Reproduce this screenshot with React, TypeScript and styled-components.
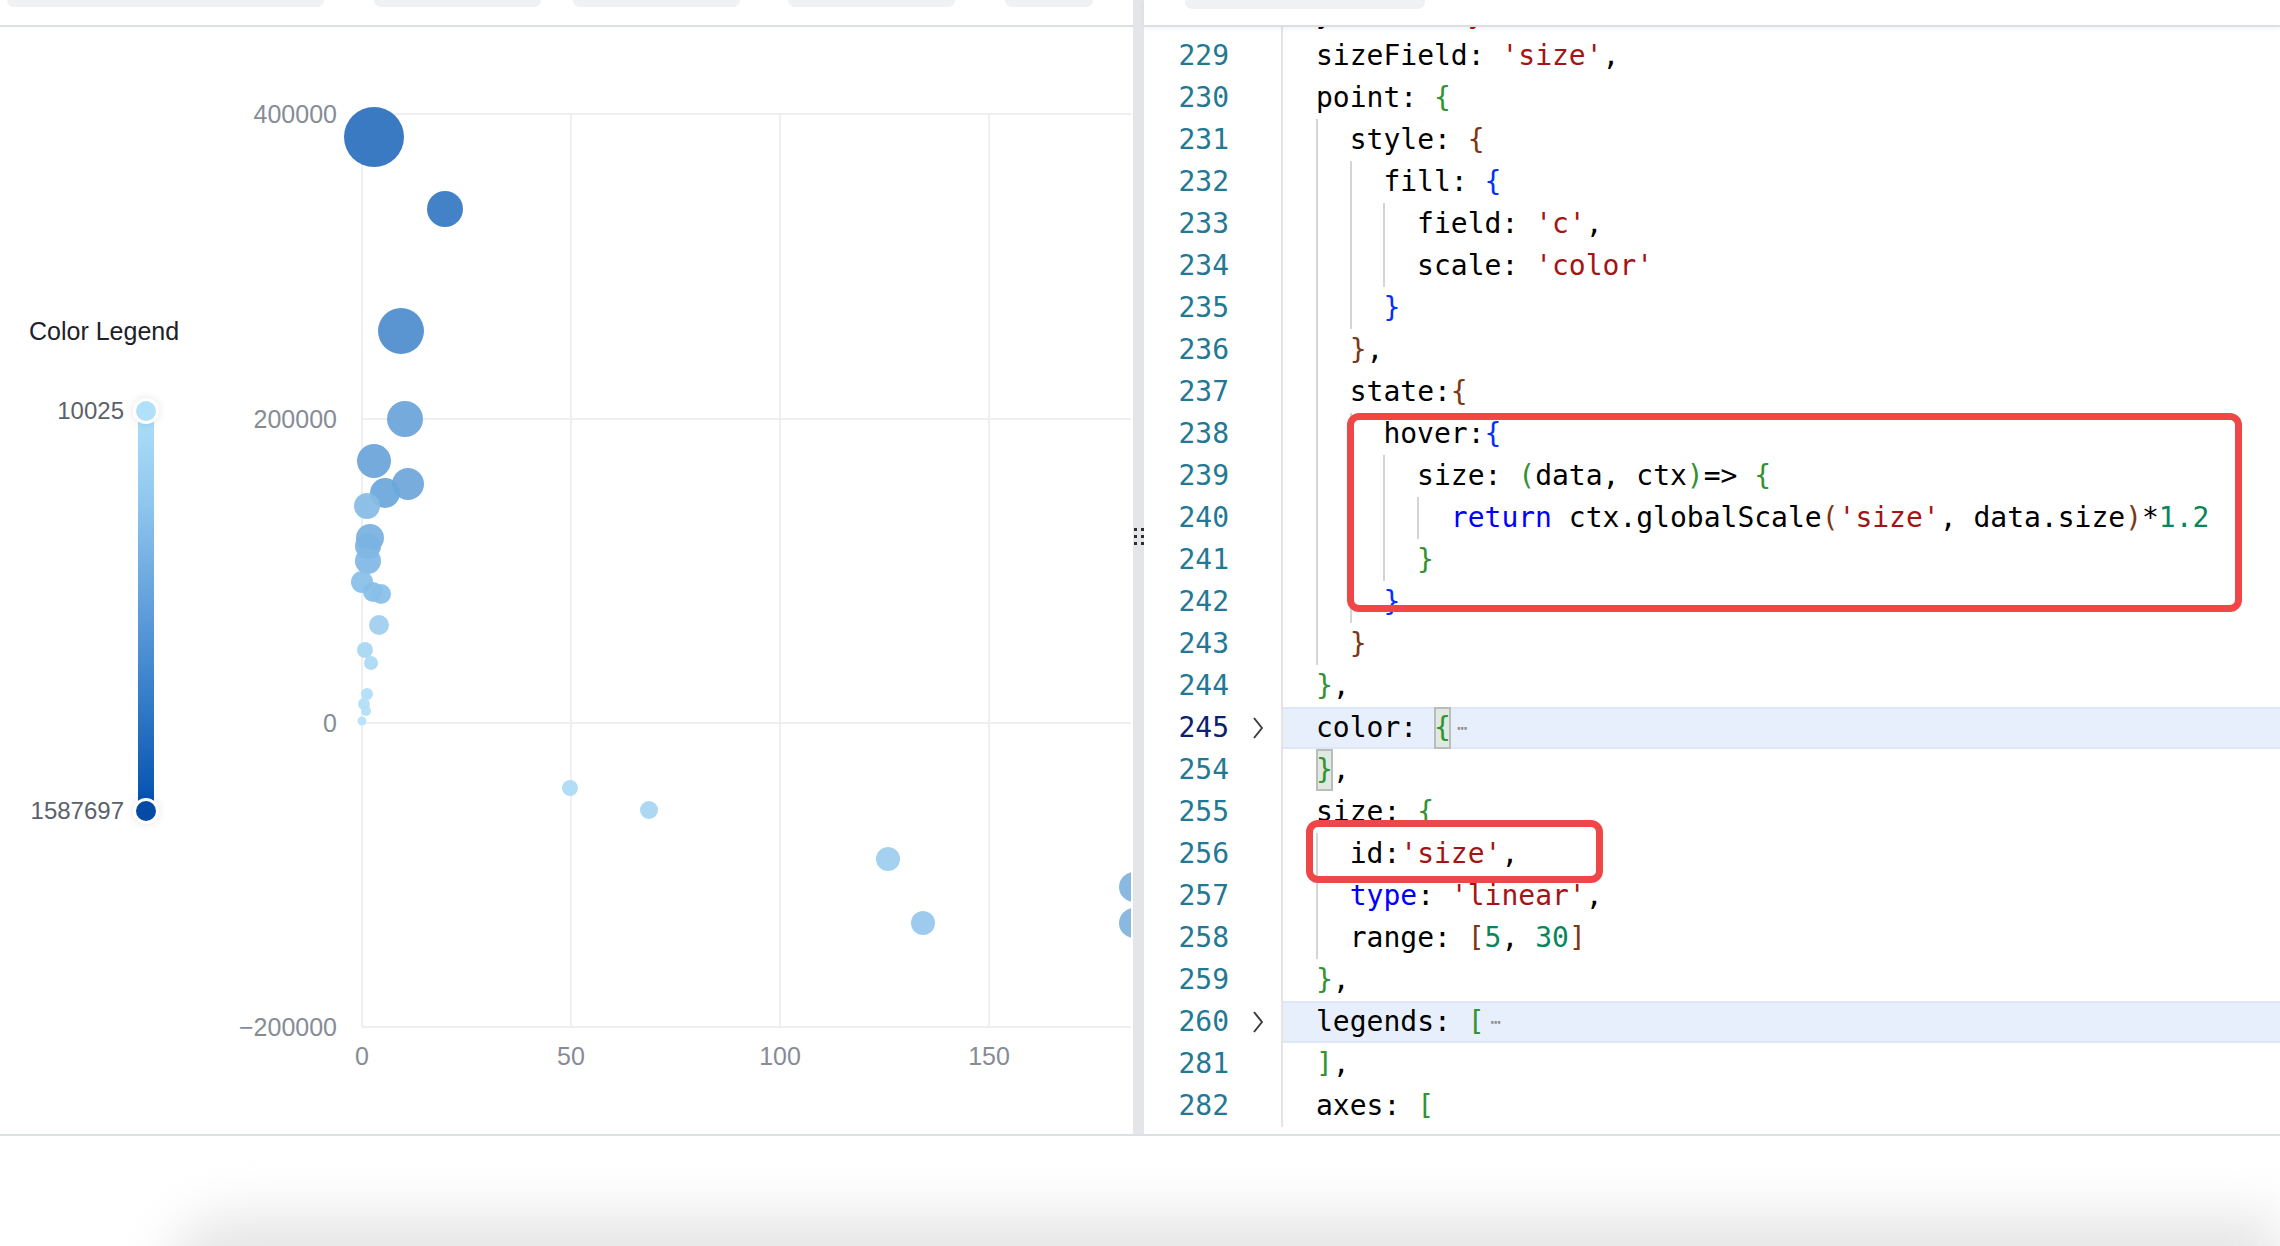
import React from 'react';
import styled, { createGlobalStyle } from 'styled-components';

const GlobalStyle = createGlobalStyle`
  html, body {
    margin: 0;
    padding: 0;
    background: #fff;
  }
  body {
    font-family: "Liberation Sans", Arial, sans-serif;
  }
`

const Page = styled.div`
    position: relative;
    width: 2280px;
    height: 1246px;
    display: flex;
    flex-direction: column;
    overflow: hidden;
    background: #fff;
`

const Workspace = styled.div`
    height: 1134px;
    display: flex;
    border-bottom: 2px solid #dcdfe3;
    flex-shrink: 0;
`

const Pane = styled.div<{ $w?: number }>`
    ${p => p.$w ? `width: ${p.$w}px;` : 'flex: 1;'}
    display: flex;
    flex-direction: column;
    min-width: 0;
`

const TabStrip = styled.div<{ $shadow?: boolean }>`
    height: 25px;
    flex-shrink: 0;
    display: flex;
    align-items: flex-start;
    border-bottom: 2px solid #dcdfe3;
    ${p => p.$shadow ? 'box-shadow: 0 2px 5px rgba(0,0,0,0.05);' : ''}
    position: relative;
    z-index: 1;
`

const TabStub = styled.div<{ $w: number; $ml: number; $h?: number }>`
    width: ${p => p.$w}px;
    margin-left: ${p => p.$ml}px;
    height: ${p => p.$h || 7}px;
    background: #f0f1f3;
    border-radius: 0 0 7px 7px;
`

const Divider = styled.div`
    width: 11px;
    flex-shrink: 0;
    background: #e3e5e9;
    display: flex;
    justify-content: center;
    padding-top: 528px;
    box-sizing: border-box;
`

const Grip = styled.div`
    display: grid;
    grid-template-columns: 3px 3px;
    grid-auto-rows: 3px;
    column-gap: 4px;
    row-gap: 4px;
    height: max-content;
`

const GripDot = styled.span`
    background: #2e2e2e;
`

/* ---------- chart side ---------- */

const ChartArea = styled.div`
    flex: 1;
    display: flex;
    overflow: hidden;
`

const Legend = styled.div`
    width: 230px;
    flex-shrink: 0;
    box-sizing: border-box;
    padding: 289px 0 0 29px;
    display: flex;
    flex-direction: column;
`

const LegendTitle = styled.div`
    font-size: 25px;
    line-height: 30px;
    color: #1d2129;
`

const ScaleRow = styled.div`
    margin-top: 50px;
    display: flex;
`

const ScaleLabels = styled.div`
    width: 95px;
    height: 430px;
    display: flex;
    flex-direction: column;
    justify-content: space-between;
    align-items: flex-end;
    font-size: 24px;
    line-height: 30px;
    color: #5b616b;
`

const ScaleTrack = styled.div`
    position: relative;
    width: 16px;
    height: 400px;
    margin: 15px 0 0 14px;
    border-radius: 8px;
    background: linear-gradient(#ade0f8 0%, #92c8ef 22%, #5f9edb 50%, #2f78c6 75%, #004fae 100%);
`

const ScaleHandle = styled.span<{ $c: string; $bottom?: boolean }>`
    position: absolute;
    left: -5px;
    ${p => p.$bottom ? 'bottom: -13px;' : 'top: -13px;'}
    width: 20px;
    height: 20px;
    border-radius: 50%;
    background: ${p => p.$c};
    border: 3px solid #fff;
    box-shadow: 0 0 10px rgba(0, 0, 0, 0.1);
`

const Plot = styled.svg`
    display: block;
    flex-shrink: 0;
`

/* ---------- editor side ---------- */

const Editor = styled.div`
    flex: 1;
    overflow: hidden;
    background: #fff;
    font-family: "DejaVu Sans Mono", "Liberation Mono", monospace;
    font-size: 28px;
`

const Lines = styled.div`
    margin-top: -34px;
`

const LineRow = styled.div`
    display: flex;
    height: 42px;
`

const LineNo = styled.div<{ $active?: boolean }>`
    width: 85px;
    flex-shrink: 0;
    text-align: right;
    line-height: 42px;
    color: ${p => p.$active ? '#0b216f' : '#237893'};
`

const FoldCell = styled.div`
    width: 52px;
    flex-shrink: 0;
    display: flex;
    align-items: center;
    justify-content: center;
    padding-left: 6px;
    box-sizing: border-box;
`

const CodeCell = styled.div<{ $hl?: boolean }>`
    flex: 1;
    display: flex;
    align-items: stretch;
    white-space: pre;
    padding-left: 33px;
    border-left: 2px solid #e4e4e4;
    background: ${p => p.$hl ? '#e7effc' : 'transparent'};
    box-shadow: ${p => p.$hl ? 'inset 0 2px 0 #dde7f8, inset 0 -2px 0 #dde7f8' : 'none'};
`

const Indent = styled.span<{ $guide: boolean }>`
    display: inline-block;
    width: 2ch;
    flex-shrink: 0;
    box-shadow: ${p => p.$guide ? 'inset 2px 0 0 #d4d4d4' : 'none'};
`

const CodeText = styled.span`
    line-height: 42px;
    color: #000;
`

const Tok = styled.span<{ $c: string }>`
    color: ${p => p.$c};
`

const MatchBracket = styled.span<{ $c: string }>`
    display: inline-block;
    height: 42px;
    color: ${p => p.$c};
    background: #dfe9e2;
    box-shadow: inset 0 0 0 2px #b9bdbb;
`

const FoldDots = styled.span`
    font-size: 18px;
    color: #8d8d8d;
    margin-left: 6px;
    letter-spacing: -1px;
    vertical-align: 3px;
`

const Annotation = styled.div<{ $x: number; $y: number; $w: number; $h: number }>`
    position: absolute;
    left: ${p => p.$x}px;
    top: ${p => p.$y}px;
    width: ${p => p.$w}px;
    height: ${p => p.$h}px;
    box-sizing: border-box;
    border: 7px solid #ef4747;
    border-radius: 12px;
    pointer-events: none;
`

const Footer = styled.div`
    flex: 1;
    padding: 78px 0 0 165px;
    overflow: hidden;
`

const FooterShade = styled.div`
    height: 140px;
    border-radius: 70px 0 0 0;
    background: #e6e6e6;
    filter: blur(26px);
`

/* ---------- data ---------- */

const C = {
    k: '#000000',
    s: '#a31515',
    n: '#098658',
    kw: '#0000ff',
    g: '#319331',
    b: '#7b3814',
    u: '#0431fa',
};

type Seg = [string, string] | ['box', string, string] | ['dots'];

type Line = {
    no: number;
    guides: boolean[];
    segs: Seg[];
    fold?: boolean;
    hl?: boolean;
    active?: boolean;
};

const L = (no: number, depth: number, segs: Seg[], opts: Partial<Line> = {}): Line => ({
    no,
    guides: Array.from({ length: depth }, () => true),
    segs,
    ...opts,
});

const lines: Line[] = [
    L(228, 0, [["yField: ", C.k], ["'y'", C.s], [",", C.k]]),
    L(229, 0, [["sizeField: ", C.k], ["'size'", C.s], [",", C.k]]),
    L(230, 0, [["point: ", C.k], ["{", C.g]]),
    L(231, 1, [["style: ", C.k], ["{", C.b]]),
    L(232, 2, [["fill: ", C.k], ["{", C.u]]),
    L(233, 3, [["field: ", C.k], ["'c'", C.s], [",", C.k]]),
    L(234, 3, [["scale: ", C.k], ["'color'", C.s]]),
    L(235, 2, [["}", C.u]]),
    L(236, 1, [["}", C.b], [",", C.k]]),
    L(237, 1, [["state:", C.k], ["{", C.b]]),
    L(238, 2, [["hover:", C.k], ["{", C.u]]),
    L(239, 3, [["size: ", C.k], ["(", C.g], ["data, ctx", C.k], [")", C.g], ["=> ", C.k], ["{", C.g]]),
    L(240, 4, [["return", C.kw], [" ctx.globalScale", C.k], ["(", C.b], ["'size'", C.s], [", data.size", C.k], [")", C.b], ["*", C.k], ["1.2", C.n]]),
    L(241, 3, [["}", C.g]]),
    L(242, 2, [["}", C.u]]),
    L(243, 1, [["}", C.b]]),
    L(244, 0, [["}", C.g], [",", C.k]]),
    L(245, 0, [["color: ", C.k], ['box', "{", C.g], ['dots']], { fold: true, hl: true, active: true }),
    L(254, 0, [['box', "}", C.g], [",", C.k]]),
    L(255, 0, [["size: ", C.k], ["{", C.g]]),
    L(256, 1, [["id:", C.k], ["'size'", C.s], [",", C.k]]),
    L(257, 1, [["type", C.kw], [": ", C.k], ["'linear'", C.s], [",", C.k]]),
    L(258, 1, [["range: ", C.k], ["[", C.b], ["5", C.n], [", ", C.k], ["30", C.n], ["]", C.b]]),
    L(259, 0, [["}", C.g], [",", C.k]]),
    L(260, 0, [["legends: ", C.k], ["[", C.g], ['dots']], { fold: true, hl: true }),
    L(281, 0, [["]", C.g], [",", C.k]]),
    L(282, 0, [["axes: ", C.k], ["[", C.g]]),
];

type Bubble = [number, number, number, string];

const bubbles: Bubble[] = [
    [374, 137, 30, '#2b70be'],
    [445, 209, 18, '#3679c3'],
    [401, 331, 23, '#4f8dce'],
    [405, 419, 18, '#6aa4d9'],
    [374, 461, 17, '#6ba4d9'],
    [408, 484, 16, '#6da6da'],
    [385, 493, 15, '#6ba8dc'],
    [367, 506, 13, '#86bbe5'],
    [370, 538, 14, '#79b2e2'],
    [368, 546, 13, '#7bb4e3'],
    [368, 561, 13, '#80b7e4'],
    [362, 582, 11, '#89c0e8'],
    [373, 592, 10, '#87bde7'],
    [381, 594, 10, '#89bfe8'],
    [379, 625, 10, '#a0cef0'],
    [365, 650, 8, '#a8d6f4'],
    [371, 663, 7, '#abd9f5'],
    [367, 694, 6, '#b0ddf7'],
    [364, 704, 6, '#b3dff8'],
    [366, 711, 5, '#b3dff8'],
    [362, 721, 4.5, '#b7e1f9'],
    [570, 788, 8, '#acdaf5'],
    [649, 810, 9, '#a6d5f3'],
    [888, 859, 12, '#9dcdee'],
    [923, 923, 12, '#97c7ec'],
    [1134, 887, 15, '#80b3df'],
    [1134, 923, 15, '#80b3df'],
];

const yTicks: [string, number][] = [
    ['400000', 114],
    ['200000', 419],
    ['0', 723],
    ['\u2212200000', 1027],
];

const xTicks: [string, number][] = [
    ['0', 362],
    ['50', 571],
    ['100', 780],
    ['150', 989],
];

const leftTabs = [
    { w: 317, ml: 7 },
    { w: 167, ml: 50 },
    { w: 167, ml: 32 },
    { w: 167, ml: 48 },
    { w: 88, ml: 50 },
];

const Chevron = () => (
    <svg width="14" height="24" viewBox="0 0 14 24">
        <polyline points="3,2 11,12 3,22" fill="none" stroke="#3b3b3b" strokeWidth="2" strokeLinejoin="round" />
    </svg>
);

const Chart = () => (
    <Plot width={901} height={1107} viewBox="230 27 901 1107">
        {yTicks.map(([, y]) => (
            <line key={'h' + y} x1={362} x2={1131} y1={y} y2={y} stroke="#eeeff1" strokeWidth={2} />
        ))}
        {xTicks.map(([, x]) => (
            <line key={'v' + x} x1={x} x2={x} y1={114} y2={1027} stroke="#eeeff1" strokeWidth={2} />
        ))}
        {yTicks.map(([t, y]) => (
            <text key={'yt' + t} x={337} y={y + 9} textAnchor="end" fontSize={25} fill="#868c96"
                fontFamily='"Liberation Sans", Arial, sans-serif'>{t}</text>
        ))}
        {xTicks.map(([t, x]) => (
            <text key={'xt' + t} x={x} y={1065} textAnchor="middle" fontSize={25} fill="#868c96"
                fontFamily='"Liberation Sans", Arial, sans-serif'>{t}</text>
        ))}
        {bubbles.map(([cx, cy, r, c], i) => (
            <circle key={i} cx={cx} cy={cy} r={r} fill={c} fillOpacity={0.93} />
        ))}
    </Plot>
);

const CodeLine = ({ line }: { line: Line }) => (
    <LineRow>
        <LineNo $active={line.active}>{line.no}</LineNo>
        <FoldCell>{line.fold && <Chevron />}</FoldCell>
        <CodeCell $hl={line.hl}>
            {line.guides.map((g, i) => <Indent key={i} $guide={g} />)}
            <CodeText>
                {line.segs.map((s, i) => {
                    if (s[0] === 'dots') return <FoldDots key={i}>⋯</FoldDots>;
                    if (s[0] === 'box') return <MatchBracket key={i} $c={s[2] as string}>{s[1]}</MatchBracket>;
                    return <Tok key={i} $c={s[1] as string}>{s[0]}</Tok>;
                })}
            </CodeText>
        </CodeCell>
    </LineRow>
);

const App = () => {
    return (
        <Page>
            <GlobalStyle />
            <Workspace>
                <Pane $w={1133}>
                    <TabStrip>
                        {leftTabs.map((t, i) => <TabStub key={i} $w={t.w} $ml={t.ml} />)}
                    </TabStrip>
                    <ChartArea>
                        <Legend>
                            <LegendTitle>Color Legend</LegendTitle>
                            <ScaleRow>
                                <ScaleLabels>
                                    <span>10025</span>
                                    <span>1587697</span>
                                </ScaleLabels>
                                <ScaleTrack>
                                    <ScaleHandle $c="#b1e1f9" />
                                    <ScaleHandle $c="#054ba6" $bottom />
                                </ScaleTrack>
                            </ScaleRow>
                        </Legend>
                        <Chart />
                    </ChartArea>
                </Pane>
                <Divider>
                    <Grip>
                        {Array.from({ length: 6 }, (_, i) => <GripDot key={i} />)}
                    </Grip>
                </Divider>
                <Pane>
                    <TabStrip $shadow>
                        <TabStub $w={240} $ml={41} $h={9} />
                    </TabStrip>
                    <Editor>
                        <Lines>
                            {lines.map(l => <CodeLine key={l.no} line={l} />)}
                        </Lines>
                    </Editor>
                </Pane>
            </Workspace>
            <Footer>
                <FooterShade />
            </Footer>
            <Annotation $x={1347} $y={413} $w={895} $h={199} />
            <Annotation $x={1306} $y={820} $w={297} $h={63} />
        </Page>
    );
};

export default App;
